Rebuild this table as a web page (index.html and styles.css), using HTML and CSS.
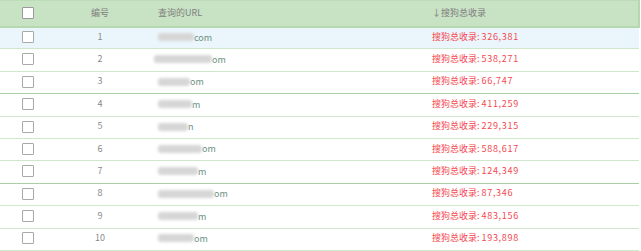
FILE: index.html
```html
<!DOCTYPE html>
<html>
<head>
<meta charset="utf-8">
<link rel="stylesheet" href="styles.css">
</head>
<body>
<table class="grid">
  <thead>
    <tr>
      <th class="c-check"><span class="box box-white"></span></th>
      <th class="c-num">编号</th>
      <th class="c-url">查询的URL</th>
      <th class="c-count">↓搜狗总收录</th>
    </tr>
  </thead>
  <tbody>
    <tr class="hl"><td class="c-check"><span class="box"></span></td><td class="c-num">1</td><td class="c-url"><span class="blur b1"></span><span class="tail">com</span></td><td class="c-count">搜狗总收录: <span class="val">326,381</span></td></tr>
    <tr><td class="c-check"><span class="box"></span></td><td class="c-num">2</td><td class="c-url"><span class="blur b2"></span><span class="tail">om</span></td><td class="c-count">搜狗总收录: <span class="val">538,271</span></td></tr>
    <tr class="dark"><td class="c-check"><span class="box"></span></td><td class="c-num">3</td><td class="c-url"><span class="blur b3"></span><span class="tail">om</span></td><td class="c-count">搜狗总收录: <span class="val">66,747</span></td></tr>
    <tr><td class="c-check"><span class="box"></span></td><td class="c-num">4</td><td class="c-url"><span class="blur b4"></span><span class="tail">m</span></td><td class="c-count">搜狗总收录: <span class="val">411,259</span></td></tr>
    <tr><td class="c-check"><span class="box"></span></td><td class="c-num">5</td><td class="c-url"><span class="blur b5"></span><span class="tail">n</span></td><td class="c-count">搜狗总收录: <span class="val">229,315</span></td></tr>
    <tr><td class="c-check"><span class="box"></span></td><td class="c-num">6</td><td class="c-url"><span class="blur b6"></span><span class="tail">om</span></td><td class="c-count">搜狗总收录: <span class="val">588,617</span></td></tr>
    <tr class="dark"><td class="c-check"><span class="box"></span></td><td class="c-num">7</td><td class="c-url"><span class="blur b7"></span><span class="tail">m</span></td><td class="c-count">搜狗总收录: <span class="val">124,349</span></td></tr>
    <tr><td class="c-check"><span class="box"></span></td><td class="c-num">8</td><td class="c-url"><span class="blur b8"></span><span class="tail">om</span></td><td class="c-count">搜狗总收录: <span class="val">87,346</span></td></tr>
    <tr><td class="c-check"><span class="box"></span></td><td class="c-num">9</td><td class="c-url"><span class="blur b9"></span><span class="tail">m</span></td><td class="c-count">搜狗总收录: <span class="val">483,156</span></td></tr>
    <tr><td class="c-check"><span class="box"></span></td><td class="c-num">10</td><td class="c-url"><span class="blur b10"></span><span class="tail">om</span></td><td class="c-count">搜狗总收录: <span class="val">193,898</span></td></tr>
  </tbody>
</table>
</body>
</html>
```

FILE: styles.css
```css
html, body {
  margin: 0;
  padding: 0;
  background: #ffffff;
}
body {
  font-family: "Noto Sans CJK SC", "Noto Sans", sans-serif;
  font-size: 9px;
  color: #777;
}
.grid {
  width: 640px;
  border-collapse: collapse;
  table-layout: fixed;
}
.grid th, .grid td {
  padding: 0;
  white-space: nowrap;
  overflow: hidden;
  text-align: left;
  font-weight: normal;
  line-height: 12px;
}
.grid thead tr {
  height: 26px;
  background: #c8e2c4;
  border-top: 1px solid #bcdcb8;
  border-bottom: 2px solid #b5d8b1;
}
.grid thead th {
  color: #808080;
  font-size: 9px;
  padding-bottom: 1px;
}
.grid thead th.c-count {
  border-right: 2px solid #b5d8b1;
}
.grid tbody tr {
  height: 22.4px;
  border-bottom: 1px solid #cfe7cb;
}
.grid tbody tr.dark {
  border-bottom: 1px solid #a9cfa4;
}
.grid tbody tr.hl {
  background: #ebf6fc;
}
.grid tbody td {
  padding-bottom: 2px;
}
.c-check { width: 56px; text-align: center !important; }
.c-num { width: 88px; text-align: center !important; }
.c-url { width: 260px; padding-left: 14px !important; }
.c-count { padding-left: 14px !important; }
.grid td.c-count { color: #f5474f; }
.grid td.c-num { color: #8a8a8a; }
.val { letter-spacing: 0.7px; }

.box {
  display: inline-block;
  width: 10px;
  height: 10px;
  border: 1px solid #a9a9a9;
  border-radius: 1px;
  background: #fff;
  vertical-align: middle;
  margin-left: -1px;
}
.box-white {
  border-color: #9a9a9a;
}
.blur {
  display: inline-block;
  height: 8px;
  vertical-align: middle;
  background: #d6d6d6;
  filter: blur(1.5px);
  border-radius: 3px;
}
.tail {
  color: #6b8f80;
  vertical-align: middle;
}
.b1 { width: 36px; }
.b2 { width: 58px; margin-left: -4px; }
.b3 { width: 32px; }
.b4 { width: 34px; }
.b5 { width: 30px; }
.b6 { width: 44px; }
.b7 { width: 40px; }
.b8 { width: 56px; }
.b9 { width: 40px; }
.b10 { width: 36px; }
```
